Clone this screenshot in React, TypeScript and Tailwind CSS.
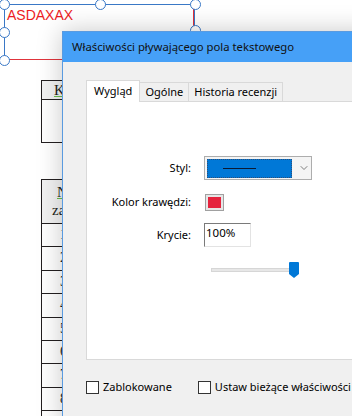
import { ChevronDown } from "lucide-react";

const ui = { fontFamily: '"Noto Sans", "Open Sans", sans-serif' };
const serif = { fontFamily: '"Liberation Serif", "DejaVu Serif", serif' };

const rows = ["1", "2", "3", "4", "5", "6", "7", "8", "9"];

const TextAnnotation = () => {
  const handles = [
    [4, 4],
    [100, 4],
    [195, 4],
    [4, 32],
    [195, 30],
    [4, 60],
  ];
  return (
    <div className="absolute left-0 top-0 w-[200px] h-[66px]">
      <div className="absolute left-[4px] top-[4px] w-[191px] h-[56px] border border-[#3a78c6]" />
      <div className="absolute left-[10px] top-[8px] w-[184px] h-[52px] border-r border-b border-[#e0343c]" />
      <span
        className="absolute left-[7px] top-[6px] text-[14px] leading-[18px] text-[#ec1c24]"
        style={{ fontFamily: '"Liberation Sans", Arial, sans-serif' }}
      >
        ASDAXAX
      </span>
      {handles.map(([x, y]) => (
        <div
          key={`${x}-${y}`}
          className="absolute w-[11px] h-[11px] -ml-[5.5px] -mt-[5.5px] rounded-full bg-white border border-[#3a78c6]"
          style={{ left: x, top: y }}
        />
      ))}
    </div>
  );
};

const DocumentTables = () => (
  <div className="absolute left-[41px] top-[80px] w-[80px]" style={serif}>
    <div className="border border-[#231f20] h-[63px] flex flex-col">
      <div className="h-[19px] border-b border-[#231f20] bg-[#f2f2f2] pl-[12px] text-[15px] leading-[18px] text-[#231f20]">
        <span className="underline decoration-[#6bbf4e]">K</span>
      </div>
    </div>
    <div className="mt-[36px] border-l border-t border-[#231f20]">
      <div className="h-[44px] border-b border-[#231f20] bg-[#f2f2f2] pl-[15px] pt-[3px] text-[15px] leading-[18px] text-[#231f20]">
        <span className="underline decoration-[#6bbf4e]">N</span>
        <div className="-ml-[5px]">za</div>
      </div>
      {rows.map((r) => (
        <div
          key={r}
          className="h-[23.4px] border-b border-[#231f20] pl-[18px] text-[14px] leading-[22px] text-[#231f20]"
        >
          {r}
        </div>
      ))}
    </div>
  </div>
);

const Checkbox = ({ label }: { label: string }) => (
  <label className="flex items-center gap-[4px] whitespace-nowrap text-[11px] leading-[16px] text-black">
    <span className="w-[13px] h-[13px] shrink-0 border border-[#333] bg-white" />
    {label}
  </label>
);

const Dialog = () => (
  <div
    className="absolute left-[62px] top-[31px] w-[320px] h-[400px] flex flex-col bg-[#f0f0f0] border border-[#5a9be0] shadow-[0_0_24px_rgba(0,0,0,0.22)]"
    style={ui}
  >
    <div className="h-[30px] shrink-0 flex items-center px-[9px] bg-[#46a0f7] text-[11.3px] text-[#111]">
      Właściwości pływającego pola tekstowego
    </div>

    <div className="flex flex-col pl-[23px] pt-[17px]">
      <div className="flex items-end text-[11px] text-black">
        <div className="h-[22px] px-[7px] flex items-center bg-white border border-b-0 border-[#d9d9d9] relative top-[1px]">
          Wygląd
        </div>
        <div className="h-[19px] px-[5px] flex items-center border-t border-r border-[#d9d9d9]">
          Ogólne
        </div>
        <div className="h-[19px] px-[5px] flex items-center border-t border-r border-[#d9d9d9]">
          Historia recenzji
        </div>
      </div>

      <div className="h-[259px] bg-white border border-[#d9d9d9] pt-[54px] flex flex-col text-[11px] text-black">
        <div className="flex items-center">
          <span className="w-[104px] text-right">Styl:</span>
          <div className="ml-[13px] w-[108px] h-[24px] flex items-center border border-[#adadad] bg-[#f4f4f4]">
            <div className="ml-[2px] w-[85px] h-[19px] bg-[#0078d7] border border-dotted border-[#2c4f7a] flex items-center pl-[15px]">
              <div className="w-[33px] h-[1px] bg-[#0b1a33]" />
            </div>
            <ChevronDown className="ml-[6px] w-[12px] h-[12px] text-[#555]" strokeWidth={1.5} />
          </div>
        </div>

        <div className="flex items-center mt-[14px]">
          <span className="w-[104px] text-right">Kolor krawędzi:</span>
          <div className="ml-[14px] w-[19px] h-[17px] border border-[#a0a0a0] bg-[#e6e6e6] p-[2px]">
            <div className="w-full h-full bg-[#e5233d]" />
          </div>
        </div>

        <div className="flex items-center mt-[12px]">
          <span className="w-[104px] text-right">Krycie:</span>
          <div className="ml-[13px] w-[47px] h-[24px] border border-[#e3e3e3] border-t-[#7a7a7a] border-l-[#7a7a7a] pl-[1px] leading-[18px] text-[11.5px]">
            100%
          </div>
        </div>

        <div className="flex items-center mt-[15px] ml-[124px] relative w-[90px] h-[16px]">
          <div className="w-[80px] h-[4px] bg-[#e7e7e7] border border-[#d6d6d6]" />
          <svg className="absolute left-[78px] top-0" width="10" height="16" viewBox="0 0 10 16">
            <path d="M0 1 Q0 0 1 0 H9 Q10 0 10 1 V12 L5 16 L0 12 Z" fill="#0078d7" />
          </svg>
        </div>
      </div>

      <div className="flex items-center mt-[19px]">
        <Checkbox label="Zablokowane" />
        <div className="ml-[26px]">
          <Checkbox label="Ustaw bieżące właściwości jako domyślne" />
        </div>
      </div>
    </div>
  </div>
);

export default function App() {
  return (
    <div className="relative w-[352px] h-[416px] overflow-hidden bg-white">
      <TextAnnotation />
      <DocumentTables />
      <Dialog />
    </div>
  );
}
